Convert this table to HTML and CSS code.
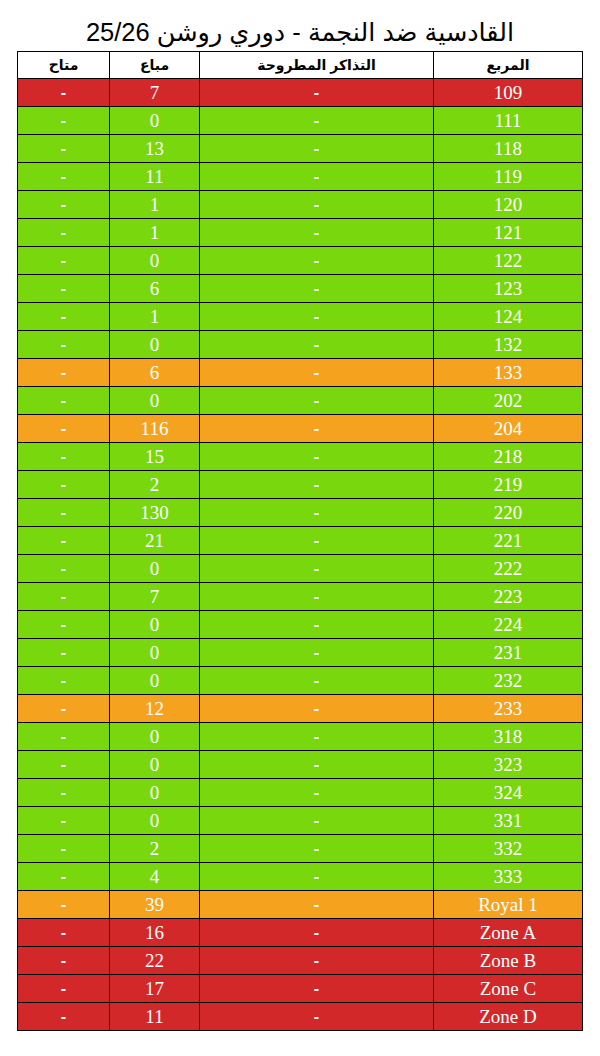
FILE: index.html
```html
<!DOCTYPE html>
<html lang="ar" dir="rtl">
<head>
<meta charset="utf-8">
<link rel="stylesheet" href="styles.css">
</head>
<body>
<div class="page">
<h1 class="title">القادسية ضد النجمة - دوري روشن 25/26</h1>
<table class="tickets">
<colgroup>
<col class="c-block"><col class="c-offered"><col class="c-sold"><col class="c-avail">
</colgroup>
<thead>
<tr><th>المربع</th><th>التذاكر المطروحة</th><th>مباع</th><th>متاح</th></tr>
</thead>
<tbody>
<tr class="red"><td>109</td><td>-</td><td>7</td><td>-</td></tr>
<tr class="green"><td>111</td><td>-</td><td>0</td><td>-</td></tr>
<tr class="green"><td>118</td><td>-</td><td>13</td><td>-</td></tr>
<tr class="green"><td>119</td><td>-</td><td>11</td><td>-</td></tr>
<tr class="green"><td>120</td><td>-</td><td>1</td><td>-</td></tr>
<tr class="green"><td>121</td><td>-</td><td>1</td><td>-</td></tr>
<tr class="green"><td>122</td><td>-</td><td>0</td><td>-</td></tr>
<tr class="green"><td>123</td><td>-</td><td>6</td><td>-</td></tr>
<tr class="green"><td>124</td><td>-</td><td>1</td><td>-</td></tr>
<tr class="green"><td>132</td><td>-</td><td>0</td><td>-</td></tr>
<tr class="orange"><td>133</td><td>-</td><td>6</td><td>-</td></tr>
<tr class="green"><td>202</td><td>-</td><td>0</td><td>-</td></tr>
<tr class="orange"><td>204</td><td>-</td><td>116</td><td>-</td></tr>
<tr class="green"><td>218</td><td>-</td><td>15</td><td>-</td></tr>
<tr class="green"><td>219</td><td>-</td><td>2</td><td>-</td></tr>
<tr class="green"><td>220</td><td>-</td><td>130</td><td>-</td></tr>
<tr class="green"><td>221</td><td>-</td><td>21</td><td>-</td></tr>
<tr class="green"><td>222</td><td>-</td><td>0</td><td>-</td></tr>
<tr class="green"><td>223</td><td>-</td><td>7</td><td>-</td></tr>
<tr class="green"><td>224</td><td>-</td><td>0</td><td>-</td></tr>
<tr class="green"><td>231</td><td>-</td><td>0</td><td>-</td></tr>
<tr class="green"><td>232</td><td>-</td><td>0</td><td>-</td></tr>
<tr class="orange"><td>233</td><td>-</td><td>12</td><td>-</td></tr>
<tr class="green"><td>318</td><td>-</td><td>0</td><td>-</td></tr>
<tr class="green"><td>323</td><td>-</td><td>0</td><td>-</td></tr>
<tr class="green"><td>324</td><td>-</td><td>0</td><td>-</td></tr>
<tr class="green"><td>331</td><td>-</td><td>0</td><td>-</td></tr>
<tr class="green"><td>332</td><td>-</td><td>2</td><td>-</td></tr>
<tr class="green"><td>333</td><td>-</td><td>4</td><td>-</td></tr>
<tr class="orange"><td>Royal 1</td><td>-</td><td>39</td><td>-</td></tr>
<tr class="red"><td>Zone A</td><td>-</td><td>16</td><td>-</td></tr>
<tr class="red"><td>Zone B</td><td>-</td><td>22</td><td>-</td></tr>
<tr class="red"><td>Zone C</td><td>-</td><td>17</td><td>-</td></tr>
<tr class="red"><td>Zone D</td><td>-</td><td>11</td><td>-</td></tr>
</tbody>
</table>
</div>
</body>
</html>
```

FILE: styles.css
```css
html, body {
  margin: 0;
  padding: 0;
  background: #ffffff;
}

.page {
  width: 600px;
  padding-top: 14px;
  display: flex;
  flex-direction: column;
  align-items: center;
}

.title {
  margin: 0;
  height: 37px;
  line-height: 36px;
  font-family: "Liberation Sans", Arial, "DejaVu Sans", sans-serif;
  font-weight: normal;
  font-size: 25.5px;
  color: #000;
  text-align: center;
}

.tickets {
  width: 565px;
  border-collapse: collapse;
  table-layout: fixed;
  border: 1px solid #000;
}

.c-block { width: 149px; }
.c-offered { width: 234px; }
.c-sold { width: 90px; }
.c-avail { width: 92px; }

.tickets th {
  height: 26px;
  padding: 0;
  border: 1px solid #000;
  background: #fff;
  color: #000;
  font-family: "Liberation Sans", Arial, "DejaVu Sans", sans-serif;
  font-weight: bold;
  font-size: 14px;
  text-align: center;
  vertical-align: middle;
}

.tickets td {
  height: 27px;
  padding: 0;
  border: 1px solid #000;
  color: #fff;
  font-family: "Liberation Serif", "Times New Roman", serif;
  font-size: 19px;
  text-align: center;
  vertical-align: middle;
  line-height: 27px;
}

.tickets td:nth-child(2),
.tickets td:nth-child(4) {
  font-family: "Liberation Sans", Arial, sans-serif;
  font-weight: bold;
  font-size: 16px;
}

.red td { background: #d3282a; }
.green td { background: #79d70e; }
.orange td { background: #f5a31f; }
```
